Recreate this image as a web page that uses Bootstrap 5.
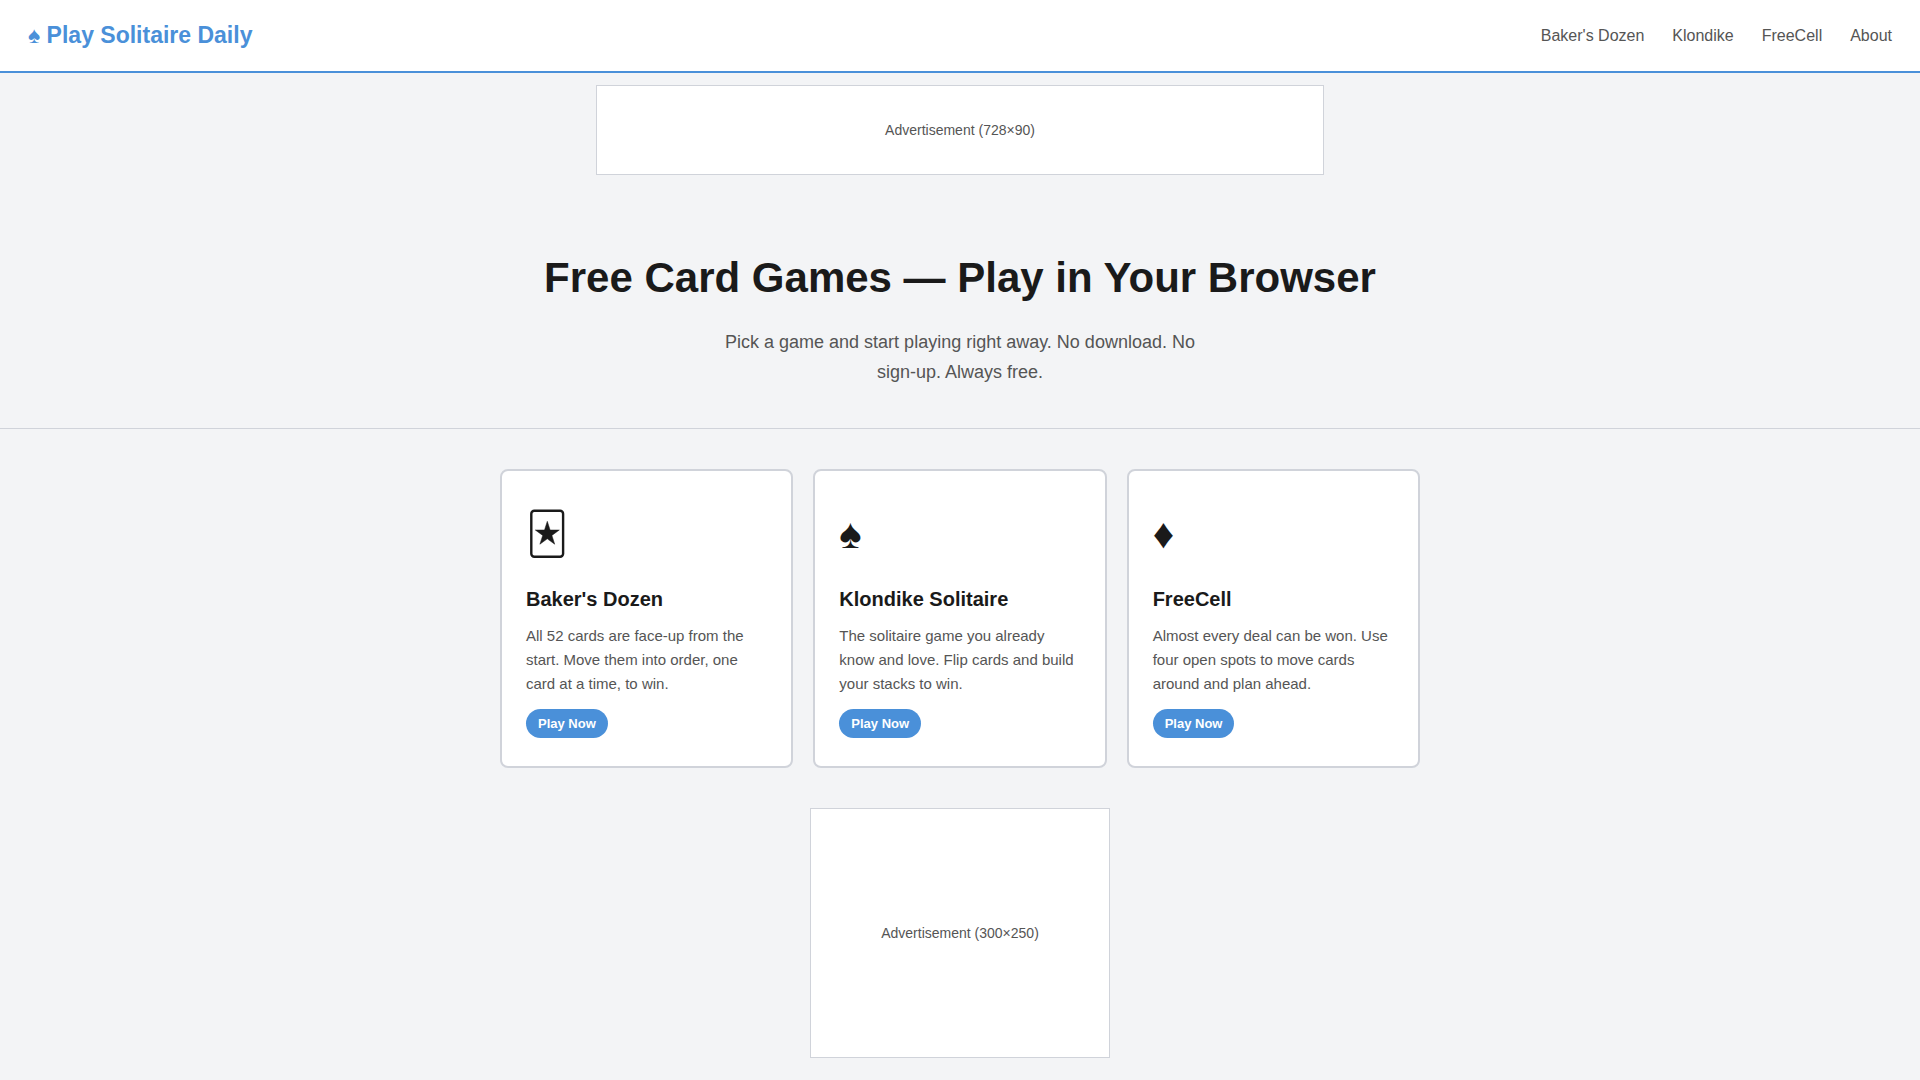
<!DOCTYPE html>
<html lang="en">
<head>
<meta charset="utf-8">
<meta name="viewport" content="width=device-width, initial-scale=1">
<title>Play Solitaire Daily</title>
<link href="https://cdn.jsdelivr.net/npm/bootstrap@5.3.0/dist/css/bootstrap.min.css" rel="stylesheet">
<style>
  :root { --brand: #4a90d9; --ink: #1a1a1a; --soft: #555; --line: #d0d3da; --page: #f3f4f6; }
  body { font-family: "Liberation Sans", Arial, sans-serif; background: var(--page); color: var(--ink); }
  a { text-decoration: none; }
  .site-header { background: #fff; border-bottom: 2px solid var(--brand); padding: 16px 28px; }
  .site-header .navbar-brand { color: var(--brand); font-size: 23px; line-height: 39px; font-weight: 700; padding: 0; }
  .site-links { gap: 4px 28px; }
  .site-links .nav-link { color: var(--soft); font-size: 16px; line-height: 24px; padding: 0; }
  .ad-slot { background: #fff; border: 1px solid var(--line); color: var(--soft); font-size: 14px; max-width: 100%; margin: 12px auto; }
  .ad-wide { width: 728px; height: 90px; }
  .ad-box { width: 300px; height: 250px; }
  .hero { border-bottom: 1px solid var(--line); padding: 56px 24px 41px; }
  .hero h1 { font-size: 42px; line-height: 70px; font-weight: 700; margin-bottom: 14px; }
  .hero p { color: var(--soft); font-size: 18px; line-height: 30px; max-width: 480px; }
  .game-wrap { max-width: 968px; padding: 40px 24px 28px; }
  .game-grid { --bs-gutter-x: 20px; --bs-gutter-y: 20px; }
  .game-card { --bs-card-border-width: 2px; --bs-card-border-color: var(--line); --bs-card-border-radius: 8px; color: var(--ink); }
  .game-card .card-body { padding: 28px 24px; }
  .game-icon { font-size: 42px; line-height: 70px; height: 70px; margin-bottom: 14px; }
  .game-icon svg { display: block; }
  .game-card h2 { font-size: 20px; line-height: 32px; font-weight: 700; margin-bottom: 9px; }
  .game-card p { color: var(--soft); font-size: 15px; line-height: 24px; margin-bottom: 13px; }
  .play-btn { background: var(--brand); color: #fff; font-size: 13px; line-height: 21px; font-weight: 700; padding: 4px 12px; border: 0; }
  .play-btn:hover { background: #357abd; color: #fff; }
</style>
</head>
<body>
<header class="site-header d-flex flex-wrap justify-content-between align-items-center">
  <a class="navbar-brand m-0" href="#">♠ Play Solitaire Daily</a>
  <nav class="site-links nav" aria-label="Main">
    <a class="nav-link" href="#bakers">Baker's Dozen</a>
    <a class="nav-link" href="#klondike">Klondike</a>
    <a class="nav-link" href="#freecell">FreeCell</a>
    <a class="nav-link" href="#about">About</a>
  </nav>
</header>
<div class="ad-slot ad-wide d-flex align-items-center justify-content-center">Advertisement (728×90)</div>
<main>
  <section class="hero text-center">
    <h1>Free Card Games — Play in Your Browser</h1>
    <p class="mx-auto mb-0">Pick a game and start playing right away. No download. No sign-up. Always free.</p>
  </section>
  <div class="game-wrap mx-auto">
    <div class="game-grid row row-cols-1 row-cols-md-3">
      <div class="col">
        <article class="game-card card h-100" id="bakers">
          <div class="card-body">
            <div class="game-icon" aria-hidden="true">
              <svg width="42" height="70" viewBox="0 0 42 70">
                <rect x="5.3" y="11.7" width="31.8" height="46" rx="3" fill="none" stroke="currentColor" stroke-width="2.4"/>
                <path d="M21.3 22.3l2.8 8.7h9.2l-7.4 5.4 2.8 8.8-7.4-5.4-7.4 5.4 2.8-8.8-7.4-5.4h9.2z" fill="currentColor" stroke="currentColor" stroke-width=".5"/>
              </svg>
            </div>
            <h2>Baker's Dozen</h2>
            <p>All 52 cards are face-up from the start. Move them into order, one card at a time, to win.</p>
            <button type="button" class="play-btn btn rounded-pill">Play Now</button>
          </div>
        </article>
      </div>
      <div class="col">
        <article class="game-card card h-100" id="klondike">
          <div class="card-body">
            <div class="game-icon" aria-hidden="true">♠</div>
            <h2>Klondike Solitaire</h2>
            <p>The solitaire game you already know and love. Flip cards and build your stacks to win.</p>
            <button type="button" class="play-btn btn rounded-pill">Play Now</button>
          </div>
        </article>
      </div>
      <div class="col">
        <article class="game-card card h-100" id="freecell">
          <div class="card-body">
            <div class="game-icon" aria-hidden="true">♦</div>
            <h2>FreeCell</h2>
            <p>Almost every deal can be won. Use four open spots to move cards around and plan ahead.</p>
            <button type="button" class="play-btn btn rounded-pill">Play Now</button>
          </div>
        </article>
      </div>
    </div>
  </div>
  <div class="ad-slot ad-box d-flex align-items-center justify-content-center">Advertisement (300×250)</div>
</main>
<script src="https://cdn.jsdelivr.net/npm/bootstrap@5.3.0/dist/js/bootstrap.bundle.min.js"></script>
</body>
</html>
